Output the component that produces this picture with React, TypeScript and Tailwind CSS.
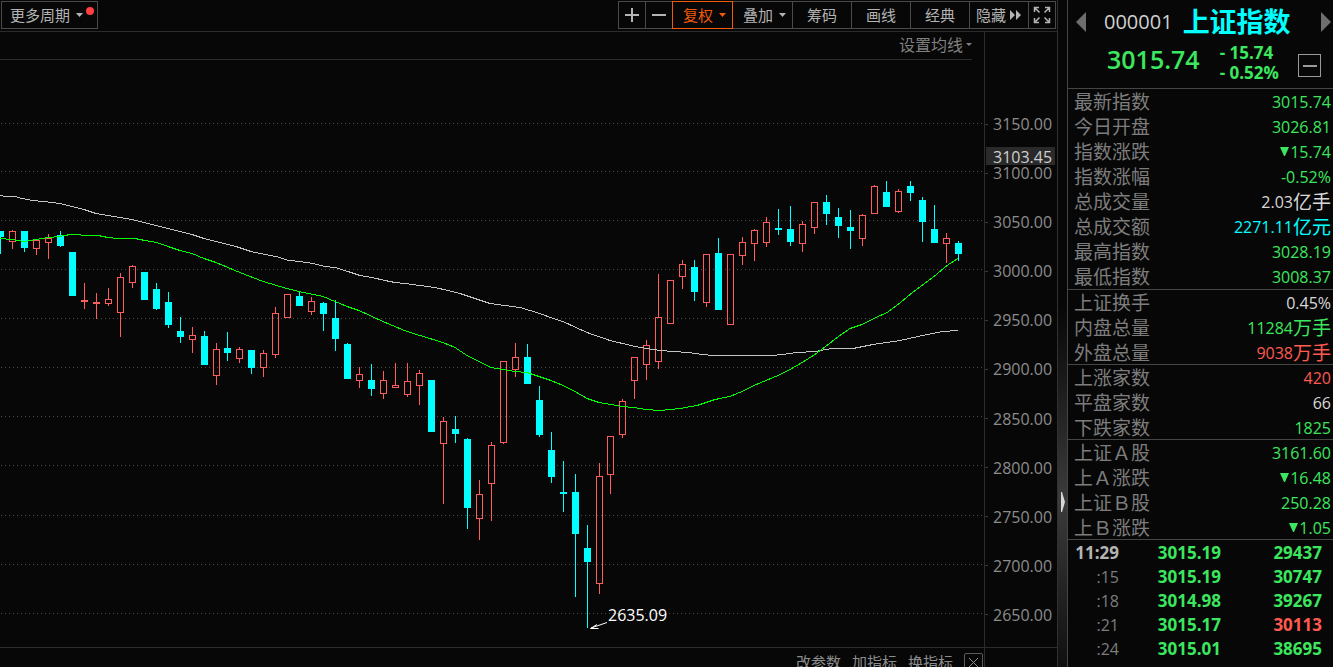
import { clsx } from 'clsx';

type Candle = [x: number, high: number, top: number, bottom: number, low: number, up: 0 | 1];

// pixel rows inside the price pane: high, body top, body bottom, low
const candles: Candle[] = [
  [0, 231, 231, 237, 254, 0],
  [12, 230, 231, 242, 249, 1],
  [24, 231, 231, 248, 252, 0],
  [36, 239, 240, 249, 255, 1],
  [48, 234, 238, 243, 259, 1],
  [60, 231, 235, 246, 247, 0],
  [72, 252, 252, 296, 296, 0],
  [84, 283, 300, 302, 309, 1],
  [96, 293, 302, 304, 319, 1],
  [108, 288, 299, 304, 306, 1],
  [120, 273, 277, 313, 337, 1],
  [132, 265, 266, 283, 288, 1],
  [144, 272, 272, 300, 300, 0],
  [156, 283, 289, 309, 310, 0],
  [168, 292, 302, 325, 328, 0],
  [180, 317, 331, 337, 343, 0],
  [192, 327, 335, 340, 353, 1],
  [204, 331, 336, 365, 365, 0],
  [216, 343, 349, 376, 385, 1],
  [227, 332, 348, 353, 361, 0],
  [239, 347, 349, 359, 363, 1],
  [251, 350, 350, 368, 374, 0],
  [263, 350, 353, 368, 377, 1],
  [275, 307, 313, 355, 358, 1],
  [287, 294, 294, 318, 318, 1],
  [299, 292, 296, 306, 306, 0],
  [311, 297, 301, 312, 315, 1],
  [323, 302, 303, 314, 331, 0],
  [335, 300, 318, 339, 351, 0],
  [347, 343, 344, 379, 379, 0],
  [359, 367, 374, 381, 388, 1],
  [371, 364, 380, 389, 396, 0],
  [383, 371, 380, 394, 399, 1],
  [395, 363, 385, 388, 388, 1],
  [407, 363, 381, 395, 397, 1],
  [419, 370, 373, 386, 405, 1],
  [431, 380, 380, 432, 432, 0],
  [443, 417, 421, 444, 504, 1],
  [455, 416, 429, 434, 443, 0],
  [467, 438, 439, 508, 529, 0],
  [479, 480, 494, 519, 540, 1],
  [491, 442, 445, 484, 521, 1],
  [503, 361, 361, 443, 444, 1],
  [515, 343, 357, 370, 377, 1],
  [527, 344, 357, 384, 384, 0],
  [539, 386, 400, 435, 437, 0],
  [551, 432, 450, 477, 483, 0],
  [563, 461, 492, 494, 512, 0],
  [575, 474, 492, 534, 597, 0],
  [587, 525, 548, 562, 628, 0],
  [599, 463, 476, 584, 594, 1],
  [610, 436, 436, 475, 494, 1],
  [622, 399, 401, 435, 438, 1],
  [634, 357, 357, 381, 399, 1],
  [646, 340, 345, 365, 380, 1],
  [658, 274, 317, 362, 369, 1],
  [670, 280, 280, 324, 324, 1],
  [682, 260, 264, 277, 289, 1],
  [694, 260, 267, 292, 301, 0],
  [706, 254, 254, 303, 307, 1],
  [718, 238, 253, 310, 310, 0],
  [730, 254, 254, 325, 325, 1],
  [742, 237, 242, 256, 265, 1],
  [754, 229, 230, 244, 261, 1],
  [766, 217, 222, 243, 247, 1],
  [778, 209, 228, 230, 235, 0],
  [790, 206, 229, 242, 246, 0],
  [802, 221, 224, 244, 252, 1],
  [814, 202, 202, 228, 234, 1],
  [826, 195, 202, 214, 225, 0],
  [838, 208, 217, 226, 238, 0],
  [850, 210, 227, 231, 249, 0],
  [862, 214, 215, 239, 246, 1],
  [874, 185, 186, 214, 214, 1],
  [886, 181, 192, 207, 207, 0],
  [898, 189, 191, 212, 213, 1],
  [910, 181, 186, 193, 201, 0],
  [922, 197, 200, 222, 242, 0],
  [934, 205, 229, 243, 243, 0],
  [946, 233, 238, 244, 263, 1],
  [958, 241, 243, 254, 261, 0],
];

const shortAverage =
  '0,238 12,239 24,241 36,239 48,237 60,236 70,234 78,234 84,235 98,235 108,237 118,238 135,238 145,240 157,242 168,246 180,250 192,253 204,258 216,262 228,267 240,272 263,281 287,288 299,291 323,296 347,306 359,310 383,321 407,331 420,335 443,342 455,347 467,355 479,361 491,367 503,369 515,371 527,372 539,376 551,380 563,385 575,391 587,398 599,402 611,404 622,406 634,407 646,409 660,410 680,408 697,405 715,399 730,396 742,391 754,385 766,380 778,375 790,369 802,362 815,354 827,345 837,337 850,328 862,324 874,318 887,312 898,304 910,294 922,285 934,276 947,265 958,258';

const longAverage =
  '0,195 6,196 15,196 22,198 33,200 43,201 52,202 60,203 72,206 84,209 96,213 108,215 120,217 132,219 144,222 156,225 168,228 180,231 192,234 204,238 216,241 228,244 236,246 251,251 265,254 276,256 289,260 300,261 313,263 325,266 335,267 348,271 360,275 372,277 385,280 395,282 405,283 420,285 435,287 448,290 460,293 475,298 490,303 505,305 520,307 540,313 553,318 563,321 576,327 587,332 610,340 635,346 647,348 660,350 673,351 689,352 702,354 713,355 772,355 783,354 797,352 815,351 832,348 853,348 873,344 900,340 927,334 943,331 958,330';

const gridRows = [123, 171, 220, 269, 318, 367, 416, 465, 515, 564, 613];

const prices = [
  '3150.00', '3100.00', '3050.00', '3000.00', '2950.00', '2900.00',
  '2850.00', '2800.00', '2750.00', '2700.00', '2650.00',
];

const GREEN = 'text-[#3ce65f]';
const RED = 'text-[#ff5a50]';
const WHITE = 'text-[#d8d8d8]';
const CYAN = 'text-[#00ffff]';

type Quote = { label: string; value: string; unit?: string; down?: boolean; color: string };

const quoteGroups: Quote[][] = [
  [
    { label: '最新指数', value: '3015.74', color: GREEN },
    { label: '今日开盘', value: '3026.81', color: GREEN },
    { label: '指数涨跌', value: '15.74', down: true, color: GREEN },
    { label: '指数涨幅', value: '-0.52%', color: GREEN },
    { label: '总成交量', value: '2.03', unit: '亿手', color: WHITE },
    { label: '总成交额', value: '2271.11', unit: '亿元', color: CYAN },
    { label: '最高指数', value: '3028.19', color: GREEN },
    { label: '最低指数', value: '3008.37', color: GREEN },
  ],
  [
    { label: '上证换手', value: '0.45%', color: WHITE },
    { label: '内盘总量', value: '11284', unit: '万手', color: GREEN },
    { label: '外盘总量', value: '9038', unit: '万手', color: RED },
  ],
  [
    { label: '上涨家数', value: '420', color: RED },
    { label: '平盘家数', value: '66', color: WHITE },
    { label: '下跌家数', value: '1825', color: GREEN },
  ],
  [
    { label: '上证Ａ股', value: '3161.60', color: GREEN },
    { label: '上Ａ涨跌', value: '16.48', down: true, color: GREEN },
    { label: '上证Ｂ股', value: '250.28', color: GREEN },
    { label: '上Ｂ涨跌', value: '1.05', down: true, color: GREEN },
  ],
];

const ticks = [
  { time: '11:29', price: '3015.19', volume: '29437', color: GREEN },
  { time: ':15', price: '3015.19', volume: '30747', color: GREEN },
  { time: ':18', price: '3014.98', volume: '39267', color: GREEN },
  { time: ':21', price: '3015.17', volume: '30113', color: RED },
  { time: ':24', price: '3015.01', volume: '38695', color: GREEN },
];

const toolButton =
  'relative -ml-px flex h-7 items-center justify-center border border-[#4a4a4a] text-[15px] leading-none text-[#b4b4b4]';

function Caret() {
  return (
    <svg width="7" height="4" viewBox="0 0 7 4" fill="currentColor" aria-hidden="true">
      <path d="M0 0h7L3.5 4z" />
    </svg>
  );
}

function Toolbar() {
  return (
    <header className="flex h-[31px] shrink-0 items-start justify-between pr-px pt-px">
      <button className="relative ml-px flex h-7 w-[97px] items-center gap-1.5 border border-[#4a4a4a] pl-2 text-[15px] leading-none text-[#b4b4b4]">
        更多周期
        <Caret />
        <span className="absolute right-[3px] top-[5px] size-2 rounded-full bg-[#ff4040]" />
      </button>
      <div className="flex">
        <button aria-label="放大" className={clsx(toolButton, 'w-7')}>
          <svg width="14" height="14" viewBox="0 0 14 14" fill="currentColor">
            <path d="M0 6h14v2H0zM6 0h2v14H6z" />
          </svg>
        </button>
        <button aria-label="缩小" className={clsx(toolButton, 'w-7')}>
          <svg width="14" height="14" viewBox="0 0 14 14" fill="currentColor">
            <path d="M0 6h14v2H0z" />
          </svg>
        </button>
        <button className="relative z-10 -ml-px flex h-7 w-[61px] items-center justify-center gap-1.5 border border-[#f25a0a] pl-1 text-[15px] leading-none text-[#f25a0a]">
          复权
          <Caret />
        </button>
        <button className={clsx(toolButton, 'w-[61px] gap-1.5 pl-1')}>
          叠加
          <Caret />
        </button>
        <button className={clsx(toolButton, 'w-[60px]')}>筹码</button>
        <button className={clsx(toolButton, 'w-[60px]')}>画线</button>
        <button className={clsx(toolButton, 'w-[60px]')}>经典</button>
        <button className={clsx(toolButton, 'w-[60px] gap-1')}>
          隐藏
          <svg width="12" height="10" viewBox="0 0 12 10" fill="currentColor" aria-hidden="true">
            <path d="M0 0l5 5-5 5zM6 0l5 5-5 5z" />
          </svg>
        </button>
        <button aria-label="全屏" className={clsx(toolButton, 'w-7')}>
          <svg width="18" height="18" viewBox="0 0 18 18" fill="none" stroke="currentColor" strokeWidth="1.5">
            <path d="M1.5 6V1.5H6M1.5 1.5l5 5M12 1.5h4.5V6M16.5 1.5l-5 5M1.5 12v4.5H6M1.5 16.5l5-5M16.5 12v4.5H12M16.5 16.5l-5-5" />
          </svg>
        </button>
      </div>
    </header>
  );
}

function PriceChart() {
  return (
    <svg className="min-h-0 w-full flex-1 overflow-hidden" role="img" aria-label="上证指数 K线">
      <g transform="translate(0 -60)" shapeRendering="crispEdges">
        {gridRows.map((y) => (
          <line key={y} x1="1" x2="100%" y1={y + 0.5} y2={y + 0.5} stroke="#4c4c4c" strokeDasharray="1 3" />
        ))}
        {candles.map(([x, high, top, bottom, low, up]) => {
          const color = up ? '#ff5c5c' : '#00ffff';
          return (
            <g key={x} fill={color}>
              <rect x={x} y={high} width="1" height={top - high} />
              <rect x={x} y={bottom} width="1" height={low - bottom} />
              {up ? (
                <rect x={x - 2.5} y={top + 0.5} width="6" height={bottom - top - 1} fill="none" stroke={color} />
              ) : (
                <rect x={x - 3} y={top} width="7" height={bottom - top} />
              )}
            </g>
          );
        })}
        <g fill="none" transform="translate(0 0.5)">
          <polyline points={longAverage} stroke="#c4c4c4" />
          <polyline points={shortAverage} stroke="#00ff00" />
        </g>
      </g>
      <g transform="translate(0 -60)">
        <path d="M607 622.5l-16 5.5M597 624.5l-6.500 4h8" fill="none" stroke="#fff" />
        <text x="608" y="621" fill="#fff" className="font-['Open_Sans',sans-serif] text-base">
          2635.09
        </text>
      </g>
    </svg>
  );
}

function PriceAxis() {
  return (
    <div className="flex w-[73px] shrink-0 flex-col border-l border-[#2c2c2c]">
      <div className="relative flex-1">
        <ol className="mt-[84px] flex h-[507px] flex-col justify-between text-base leading-4 text-[#8c8c8c]">
          {prices.map((price) => (
            <li key={price} className="flex items-center gap-[5px]">
              <span className="h-px w-[3px] bg-[#3a3a3a]" />
              {price}
            </li>
          ))}
        </ol>
        <div className="absolute left-px right-0.5 top-[115px] h-[18px] bg-[#2a2a2a] pl-[7px] text-base leading-5 text-[#cfcfcf]">
          3103.45
        </div>
      </div>
      <div className="h-5 border-t border-[#2c2c2c]" />
    </div>
  );
}

function ChartPanel() {
  return (
    <main className="flex min-w-0 flex-1 flex-col">
      <Toolbar />
      <div className="flex min-h-0 flex-1 border-t border-[#2c2c2c]">
        <div className="flex min-w-0 flex-1 flex-col">
          <div className="mr-3 flex h-7 shrink-0 justify-end border-b border-[#2c2c2c]">
            <button className="flex items-center gap-[3px] pb-0.5 text-base leading-none text-[#808080]">
              设置均线
              <svg width="6" height="3" viewBox="0 0 6 3" fill="currentColor" aria-hidden="true">
                <path d="M0 0h6L3 3z" />
              </svg>
            </button>
          </div>
          <PriceChart />
          <footer className="flex h-5 shrink-0 items-start justify-end gap-[11px] border-t border-[#2c2c2c] pr-px text-[15px] leading-7 text-[#8c8c8c]">
            <button>改参数</button>
            <button>加指标</button>
            <button>换指标</button>
            <button aria-label="关闭" className="mt-[5px] flex size-[19px] items-center justify-center rounded-xs border border-[#5a5a5a]">
              <svg width="9" height="9" viewBox="0 0 9 9" fill="none" stroke="currentColor">
                <path d="M0 0l9 9M9 0L0 9" />
              </svg>
            </button>
          </footer>
        </div>
        <PriceAxis />
      </div>
    </main>
  );
}

function Splitter() {
  return (
    <div className="flex w-2.5 shrink-0 items-center border-l border-[#303030] bg-linear-to-b from-[#070707] from-45% via-[#3c3c3c] via-75% to-[#101010]">
      <button aria-label="收起侧栏" className="mt-[336px] ml-[3px] text-[#d8d8d8]">
        <svg width="4" height="20" viewBox="0 0 4 20" fill="currentColor">
          <path d="M0 0h1l3 10-3 10H0z" />
        </svg>
      </button>
    </div>
  );
}

function QuoteHeader() {
  return (
    <div className="flex h-[88px] shrink-0 flex-col">
      <div className="flex h-[43px] items-center pl-2">
        <button aria-label="上一个" className="text-[#6e6e6e]">
          <svg width="10" height="20" viewBox="0 0 10 20" fill="currentColor">
            <path d="M10 0v20L0 10z" />
          </svg>
        </button>
        <h1 className="ml-[18px] flex items-center gap-2.5">
          <span className="text-xl leading-6 text-[#d0d0d0]">000001</span>
          <span className="text-[27px] leading-none font-bold text-[#00ffff]">上证指数</span>
        </h1>
        <button aria-label="下一个" className="mr-0.5 ml-auto text-[#6e6e6e]">
          <svg width="10" height="20" viewBox="0 0 10 20" fill="currentColor">
            <path d="M0 0v20l10-10z" />
          </svg>
        </button>
      </div>
      <div className="flex pl-[39px] text-[#3ce65f]">
        <strong className="text-[25px] leading-8 font-semibold">3015.74</strong>
        <div className="ml-5 text-[17px] leading-5 font-bold">
          <p>- 15.74</p>
          <p>- 0.52%</p>
        </div>
        <button aria-label="收起" className="mt-[11px] mr-3 ml-auto flex size-[23px] items-center justify-center border border-[#9a9a9a]">
          <span className="h-0.5 w-3.5 bg-[#9a9a9a]" />
        </button>
      </div>
    </div>
  );
}

function QuotePanel() {
  return (
    <aside className="flex w-[266px] shrink-0 flex-col overflow-hidden border-l border-[#454545]">
      <QuoteHeader />
      {quoteGroups.map((group) => (
        <dl key={group[0].label} className="border-t border-[#454545] nth-[n+4]:-mt-px">
          {group.map((row) => (
            <div key={row.label} className="flex h-[25px] items-center justify-between pr-0.5 pl-1.5">
              <dt className="text-[19px] leading-6 text-[#7d7d7d]">{row.label}</dt>
              <dd className={clsx('flex items-center text-base leading-6', row.color)}>
                {row.down && (
                  <svg width="9" height="9" viewBox="0 0 9 9" fill="currentColor" aria-label="跌">
                    <path d="M0 0h9L5 9H4z" />
                  </svg>
                )}
                <span className={row.down ? 'ml-px' : undefined}>{row.value}</span>
                {row.unit && <span className="text-[19px] leading-6">{row.unit}</span>}
              </dd>
            </div>
          ))}
        </dl>
      ))}
      <div className="-mt-px flex-1 border-t border-[#454545] pt-px">
        <table className="w-full table-fixed text-right text-[17px] font-bold">
          <tbody>
            {ticks.map((tick, i) => (
              <tr key={tick.time} className="h-6 leading-6">
                <th className={clsx('w-[51px] p-0 text-right', i === 0 ? 'font-bold text-[#b4b4b4]' : 'text-base font-normal text-[#7d7d7d]')}>
                  {tick.time}
                </th>
                <td className="w-[102px] p-0 text-[#3ce65f]">{tick.price}</td>
                <td className={clsx('p-0 pr-[11px]', tick.color)}>{tick.volume}</td>
              </tr>
            ))}
          </tbody>
        </table>
      </div>
    </aside>
  );
}

export default function App() {
  return (
    <div className="flex h-screen overflow-hidden bg-[#070707] font-['Open_Sans','Noto_Sans_CJK_SC',sans-serif]">
      <ChartPanel />
      <Splitter />
      <QuotePanel />
    </div>
  );
}
